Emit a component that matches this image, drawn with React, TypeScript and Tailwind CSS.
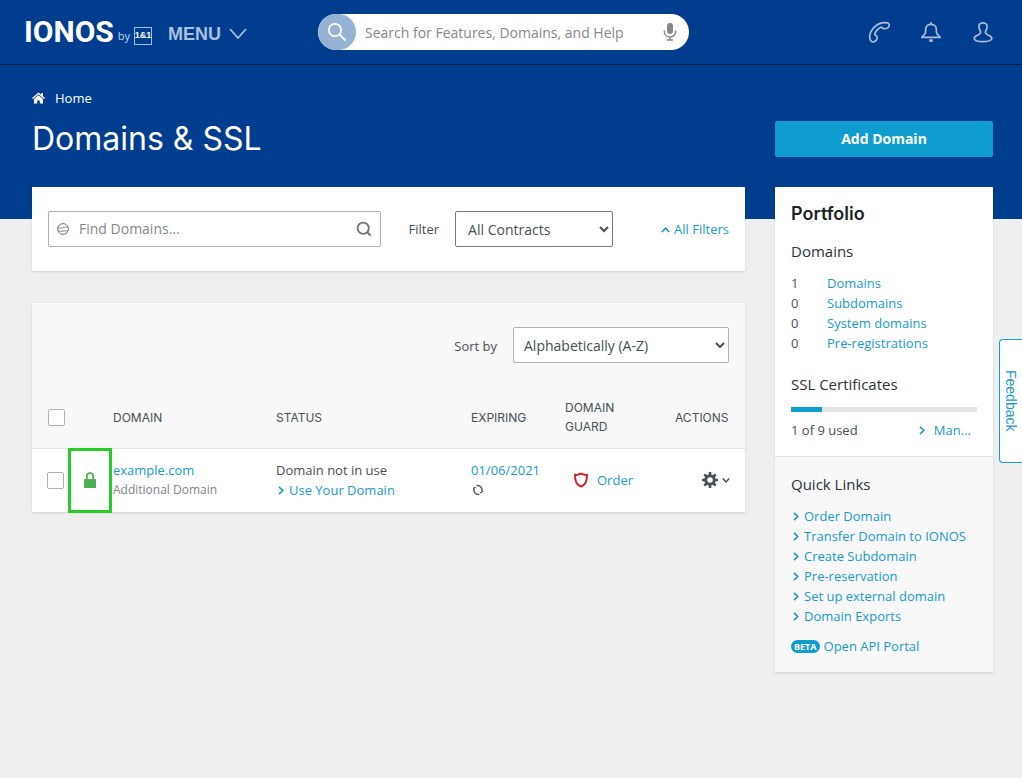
import React, { useState } from 'react';

const portfolio = [
  { count: 1, label: 'Domains' },
  { count: 0, label: 'Subdomains' },
  { count: 0, label: 'System domains' },
  { count: 0, label: 'Pre-registrations' },
];

const quickLinks = [
  'Order Domain',
  'Transfer Domain to IONOS',
  'Create Subdomain',
  'Pre-reservation',
  'Set up external domain',
  'Domain Exports',
];

const Chevron: React.FC<{ className: string }> = ({ className }) => (
  <svg className={className} viewBox="0 0 8 8" fill="none" stroke="currentColor" strokeWidth={1.4} aria-hidden="true">
    <path d="M2.6 0.8 L6 4 L2.6 7.2" />
  </svg>
);

const Header: React.FC = () => (
  <header className="flex h-[65px] items-center border-b border-[#00264f] pl-6 pr-7">
    <div className="flex w-[294px] shrink-0 items-center">
      <a href="#" className="flex items-end text-white">
        <span className="font-['Roboto'] text-[30px] font-bold leading-7">IONOS</span>
        <span className="ml-1 text-[11px] leading-5 text-[#c5d3e6]">by</span>
        <span className="mb-px ml-1 flex h-[18px] w-[18px] items-center justify-center border border-[#a9bfdc] font-['Liberation_Sans'] text-[9px] font-bold">1&amp;1</span>
      </a>
      <button className="ml-4 mt-1 flex items-center gap-2 font-['Liberation_Sans'] text-lg font-bold text-[#abc0dd]">
        MENU
        <svg className="h-3 w-[18px]" viewBox="0 0 18 12" fill="none" stroke="currentColor" strokeWidth={1.8}>
          <path d="M1 1 L9 10 L17 1" />
        </svg>
      </button>
    </div>

    <form className="flex h-9 w-[371px] items-center overflow-hidden rounded-full bg-white">
      <button type="button" aria-label="Search" className="flex h-9 w-[38px] items-center justify-center rounded-full bg-[#95b1d3] text-white">
        <svg className="h-5 w-5" viewBox="0 0 20 20" fill="none" stroke="currentColor" strokeWidth={1.8}>
          <circle cx="8" cy="8" r="6.2" />
          <path d="M12.4 12.4 L18.6 18.6" strokeWidth={2} />
        </svg>
      </button>
      <input
        type="text"
        aria-label="Search for Features, Domains, and Help"
        placeholder="Search for Features, Domains, and Help"
        className="min-w-0 flex-1 px-[9px] pt-0.5 text-sm text-[#465055] outline-none placeholder:text-[#84898c]"
      />
      <button type="button" aria-label="Voice search" className="mr-3 text-[#84898c]">
        <svg className="h-[18px] w-[14px]" viewBox="0 0 14 18" fill="none" stroke="currentColor" strokeWidth={1.5}>
          <rect x="4" y="0" width="6" height="11" rx="3" fill="currentColor" stroke="none" />
          <path d="M1.4 7.5 V9 C1.4 15.6 12.6 15.6 12.6 9 V7.5 M7 14 V17 M4 17 H10" />
        </svg>
      </button>
    </form>

    <nav className="ml-auto flex items-center gap-[30px] text-[#a9bfdc]">
      <button aria-label="Contact">
        <svg className="h-[22px] w-[22px]" viewBox="0 0 22 22" fill="none" stroke="currentColor" strokeWidth={1.7}>
          <path d="M3 20 C0.5 17 1.6 11 5.6 6.8 C9.6 2.6 15 1.2 19.4 1.8 C21.8 2.4 21.6 5.6 20 6.6 C18.4 7.6 16.4 8 15 7.4 C14 6.8 14.2 5.9 13 6.2 C10.6 6.8 7.4 10.4 6.8 13 C6.6 14.2 8 14 8.6 15 C9.4 16.2 9 18.2 8 19.6 C7 21 4.2 21.4 3 20 Z" />
        </svg>
      </button>
      <button aria-label="Notifications">
        <svg className="h-[22px] w-[22px]" viewBox="0 0 22 22" fill="none" stroke="currentColor" strokeWidth={1.7}>
          <path d="M11 1 V3.2 M2 16.4 C2.2 14.4 5.6 14 5.6 11 V8.4 C5.6 1.6 16.4 1.6 16.4 8.4 V11 C16.4 14 19.8 14.4 20 16.4 Z" />
          <path d="M9.2 19.6 H12.8" strokeWidth={2.6} />
        </svg>
      </button>
      <button aria-label="Account">
        <svg className="h-[22px] w-[22px]" viewBox="0 0 22 22" fill="none" stroke="currentColor" strokeWidth={1.7}>
          <path d="M11 1.8 C7.2 1.8 6.8 4 7 6 C7.2 9 8.6 9.8 8.6 11.6 C8.6 14.4 2.2 14 2.2 17.2 C2.2 19.6 6.6 20.6 11 20.6 C15.4 20.6 19.8 19.6 19.8 17.2 C19.8 14 13.4 14.4 13.4 11.6 C13.4 9.8 14.8 9 15 6 C15.2 4 14.8 1.8 11 1.8 Z" />
        </svg>
      </button>
    </nav>
  </header>
);

const FilterBar: React.FC = () => (
  <section className="flex items-center bg-white px-4 py-6 shadow-[0_1px_2px_rgba(0,0,0,0.12)]">
    <div className="flex h-9 min-w-0 flex-1 items-center rounded-[2px] border border-[#aeb0b2] px-2 text-[#6f7679]">
      <svg className="h-3 w-3 shrink-0" viewBox="0 0 12 12" fill="none" stroke="currentColor">
        <circle cx="6" cy="6" r="5.4" />
        <path d="M0.8 4.6 C4 6.6 7 3.2 11 4.2 M1 8 C4 9.2 8 7 11 8" strokeWidth={0.9} />
      </svg>
      <input
        type="text"
        aria-label="Find Domains"
        placeholder="Find Domains..."
        className="ml-2.5 min-w-0 flex-1 text-sm text-[#465055] outline-none placeholder:text-[#84898c]"
      />
      <button aria-label="Find">
        <svg className="h-4 w-4" viewBox="0 0 16 16" fill="none" stroke="currentColor" strokeWidth={1.8}>
          <circle cx="7.2" cy="7.2" r="5.6" />
          <path d="M11.2 11.2 L14.6 14.6" strokeWidth={2} />
        </svg>
      </button>
    </div>
    <label htmlFor="filter" className="ml-7 mt-0.5 text-[13px]">Filter</label>
    <select id="filter" className="ml-4 h-9 w-[158px] rounded-[2px] border border-[#77797b] bg-white px-2 text-sm">
      <option>All Contracts</option>
    </select>
    <a href="#" className="ml-12 mt-0.5 flex items-center gap-1 text-[13px] text-[#1a9acb]">
      <Chevron className="h-[9px] w-[9px] -rotate-90" />
      All Filters
    </a>
  </section>
);

const DomainTable: React.FC = () => {
  const [selected, setSelected] = useState<boolean>(false);
  const box = 'block h-[17px] w-[17px] appearance-none rounded-[2px] border border-[#aeb0b2] bg-white checked:bg-[#0f9dcf]';

  return (
    <section className="mt-8 bg-[#f8f8f8] shadow-[0_1px_2px_rgba(0,0,0,0.12)]">
      <div className="flex items-center justify-end px-4 pb-6 pt-6">
        <label htmlFor="sort" className="mt-1 text-[13px]">Sort by</label>
        <select id="sort" className="ml-4 h-9 w-[216px] rounded-[2px] border border-[#aeb0b2] bg-white px-1.5 text-sm">
          <option>Alphabetically (A-Z)</option>
        </select>
      </div>

      <table className="w-full table-fixed text-left text-[13px] leading-5">
        <colgroup>
          <col className="w-9" />
          <col className="w-[45px]" />
          <col className="w-[163px]" />
          <col />
          <col className="w-[94px]" />
          <col className="w-[110px]" />
          <col className="w-[70px]" />
        </colgroup>
        <thead className="font-['Inter'] text-xs leading-[19px]">
          <tr className="h-[61px] border-b border-[#e4e4e4]">
            <th className="pl-4"><input type="checkbox" aria-label="Select all domains" checked={selected} onChange={(e) => setSelected(e.target.checked)} className={box} /></th>
            <th></th>
            <th className="font-normal">DOMAIN</th>
            <th className="font-normal">STATUS</th>
            <th className="font-normal">EXPIRING</th>
            <th className="font-normal">DOMAIN<br />GUARD</th>
            <th className="font-normal">ACTIONS</th>
          </tr>
        </thead>
        <tbody className="bg-white">
          <tr className="h-16">
            <td className="pl-[15px]"><input type="checkbox" aria-label="Select example.com" checked={selected} onChange={(e) => setSelected(e.target.checked)} className={box} /></td>
            <td className="relative">
              <div className="absolute -bottom-px -top-px left-0 right-px flex items-center justify-center border-3 border-[#28cc28]">
                <svg className="h-4 w-3 text-[#4caf50]" viewBox="0 0 12 16" fill="none" stroke="currentColor">
                  <path d="M2.8 8 V4.2 C2.8 0 9.2 0 9.2 4.2 V8" strokeWidth={1.8} />
                  <rect x="0" y="7" width="12" height="9" rx="0.6" fill="currentColor" stroke="none" />
                </svg>
              </div>
            </td>
            <td>
              <a href="#" className="block text-[#1a9acb]">example.com</a>
              <p className="text-xs leading-5 text-[#808588]">Additional Domain</p>
            </td>
            <td>
              <p>Domain not in use</p>
              <a href="#" className="flex items-center gap-1 text-[#1a9acb]">
                <Chevron className="h-[9px] w-[9px]" />
                Use Your Domain
              </a>
            </td>
            <td>
              <a href="#" className="block text-[#1a9acb]">01/06/2021</a>
              <div className="flex h-5 items-center pl-px">
                <svg className="h-3 w-3" viewBox="0 0 12 12" fill="none" stroke="currentColor" strokeWidth={1.4}>
                  <path d="M4.6 1.6 C8.4 0.8 11 4.4 9.8 7.8 M7.4 10.4 C3.6 11.2 1 7.6 2.2 4.2" />
                  <path d="M10.8 6.8 L9.6 9 L7.8 8 M1.2 5.2 L2.4 3 L4.2 4" strokeWidth={1} />
                </svg>
              </div>
            </td>
            <td>
              <a href="#" className="flex items-center gap-2 pl-2 text-[#1a9acb]">
                <svg className="h-4 w-4 text-[#c9252b]" viewBox="0 0 16 16" fill="none" stroke="currentColor" strokeWidth={2}>
                  <path d="M2 2.8 C4.2 3.1 6.5 2.4 8 1.6 C9.5 2.4 11.8 3.1 14 2.8 C14.2 8.6 13 12.8 8 14.6 C3 12.8 1.8 8.6 2 2.8 Z" />
                </svg>
                Order
              </a>
            </td>
            <td>
              <button aria-label="Actions for example.com" className="ml-[27px] flex items-center gap-1">
                <svg className="h-4 w-4" viewBox="0 0 16 16" fill="none" stroke="currentColor">
                  <circle cx="8" cy="8" r="4.3" strokeWidth={3} />
                  <path d="M8 0 V3 M8 13 V16 M0 8 H3 M13 8 H16 M2.3 2.3 L4.5 4.5 M11.5 11.5 L13.7 13.7 M2.3 13.7 L4.5 11.5 M11.5 4.5 L13.7 2.3" strokeWidth={2.6} />
                </svg>
                <Chevron className="h-2 w-2 rotate-90" />
              </button>
            </td>
          </tr>
        </tbody>
      </table>
    </section>
  );
};

const Sidebar: React.FC = () => (
  <aside className="w-[218px] shrink-0 self-start bg-[#f8f8f8] shadow-[0_1px_2px_rgba(0,0,0,0.12)]">
    <div className="border-b border-[#e4e4e4] bg-white px-4 pb-4 pt-[15px]">
      <h2 className="font-['Inter'] text-lg font-semibold leading-6 text-[#1d2429]">Portfolio</h2>
      <h3 className="mt-[13px] text-[15px] leading-6 text-[#2b3338]">Domains</h3>
      <ul className="mt-[10px] text-[13px] leading-5">
        {portfolio.map((item) => (
          <li key={item.label} className="flex">
            <span className="w-9">{item.count}</span>
            <a href="#" className="text-[#1a9acb]">{item.label}</a>
          </li>
        ))}
      </ul>
      <h3 className="mt-[19px] text-[15px] leading-6 text-[#2b3338]">SSL Certificates</h3>
      <div className="mt-[11px] h-[5px] bg-[#e4e4e4]">
        <div className="h-full w-1/6 bg-[#0f9dcf]"></div>
      </div>
      <div className="mt-2 flex items-center justify-between text-[13px] leading-5">
        <span>1 of 9 used</span>
        <a href="#" className="mr-1.5 flex items-center gap-2 text-[#1a9acb]">
          <Chevron className="h-[9px] w-[9px]" />
          Man...
        </a>
      </div>
    </div>
    <div className="px-4 pb-4 pt-[15px]">
      <h3 className="text-[15px] leading-6 text-[#2b3338]">Quick Links</h3>
      <ul className="mt-2.5 text-[13px] leading-5 text-[#1a9acb]">
        {quickLinks.map((label) => (
          <li key={label}>
            <a href="#" className="flex items-center gap-1">
              <Chevron className="h-[9px] w-[9px]" />
              {label}
            </a>
          </li>
        ))}
      </ul>
      <a href="#" className="mt-2.5 flex items-center gap-1 text-[13px] leading-5 text-[#1a9acb]">
        <span className="rounded-full bg-[#0f9dcf] px-[3px] text-[9px] font-bold leading-[13px] text-white">BETA</span>
        Open API Portal
      </a>
    </div>
  </aside>
);

const App: React.FC = () => {
  return (
    <div className="relative min-h-screen bg-[#efefef] font-['Open_Sans',sans-serif] text-[#465055]">
      <div className="bg-[#003d8f]">
        <Header />
        <div className="pb-[62px] pl-8 pr-[29px] pt-[23px] text-white">
          <a href="#" className="flex items-center gap-2.5 text-[13px] leading-5">
            <svg className="h-3 w-[13px]" viewBox="0 0 13 12" fill="currentColor">
              <path d="M6.5 0.4 L0 6 L0.9 7 L6.5 2.2 L12.1 7 L13 6 L11 4.3 V1 H9.2 V2.7 Z" />
              <path d="M6.5 3.2 L2 7 V11.6 H5.2 V8.4 H7.8 V11.6 H11 V7 Z" />
            </svg>
            Home
          </a>
          <div className="mt-[13px] flex items-center justify-between">
            <h1 className="font-['Inter'] text-[32px] leading-9">Domains &amp; SSL</h1>
            <button className="h-9 w-[218px] rounded-[2px] bg-[#0f9dcf] text-sm font-bold">Add Domain</button>
          </div>
        </div>
      </div>

      <main className="-mt-8 flex gap-[30px] pb-8 pl-8 pr-[29px]">
        <div className="min-w-0 flex-1">
          <FilterBar />
          <DomainTable />
        </div>
        <Sidebar />
      </main>

      <button className="absolute right-0 top-[339px] flex h-[124px] w-[23px] items-center justify-center rounded-l border border-r-0 border-[#1a9acb] bg-white font-['Liberation_Sans'] text-sm text-[#1a9acb] [writing-mode:vertical-rl]">
        Feedback
      </button>
    </div>
  );
};

export default App;
